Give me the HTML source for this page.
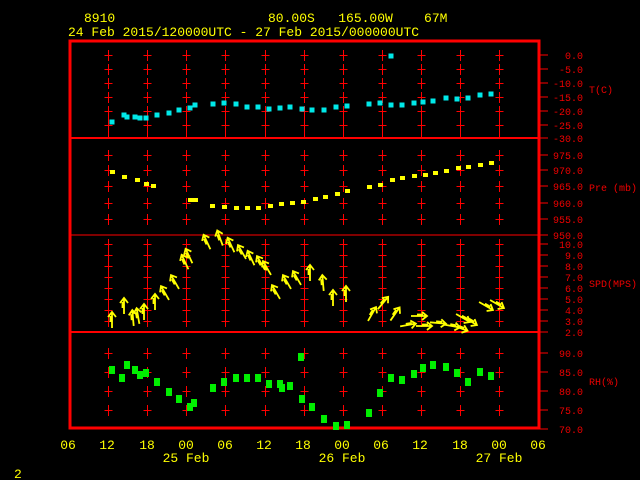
<!DOCTYPE html>
<html><head><meta charset="utf-8"><style>
html,body{margin:0;padding:0;background:#000;width:640px;height:480px;overflow:hidden}
svg{display:block}
text{font-family:"Liberation Mono",monospace}
</style></head><body>
<svg id="s" width="640" height="480" xmlns="http://www.w3.org/2000/svg">
<g fill="#ffff00" font-size="13">
<text x="84" y="22">8910</text>
<text x="268" y="22" xml:space="preserve">80.00S   165.00W    67M</text>
<text x="68" y="36">24 Feb 2015/120000UTC - 27 Feb 2015/000000UTC</text>
<g text-anchor="middle">
<text x="68" y="449">06</text><text x="107" y="449">12</text><text x="147" y="449">18</text><text x="186" y="449">00</text><text x="225" y="449">06</text><text x="264" y="449">12</text><text x="303" y="449">18</text><text x="342" y="449">00</text><text x="381" y="449">06</text><text x="420" y="449">12</text><text x="460" y="449">18</text><text x="499" y="449">00</text><text x="538" y="449">06</text>
<text x="186" y="462">25 Feb</text><text x="342" y="462">26 Feb</text><text x="499" y="462">27 Feb</text>
</g>
<text x="14" y="478">2</text>
</g>
<g id="grid" stroke="#ff0000" stroke-width="1" fill="none"></g>
<g id="lab" fill="#ee0000" font-size="10" text-anchor="end"></g>
<g fill="#ee0000" font-size="10">
<text x="589" y="93">T(C)</text><text x="589" y="191">Pre (mb)</text><text x="589" y="287">SPD(MPS)</text><text x="589" y="385">RH(%)</text>
</g>
<g stroke="#ff0000" fill="none">
<rect x="70" y="41" width="469" height="387" stroke-width="3"/>
<line x1="70" y1="138" x2="539" y2="138" stroke-width="2"/>
<line x1="70" y1="235" x2="539" y2="235" stroke-width="1"/>
<line x1="70" y1="332" x2="539" y2="332" stroke-width="2"/>
</g>
<g id="dat"></g>
</svg>
<script>
var NS="http://www.w3.org/2000/svg";
function el(p,t,a,txt){var e=document.createElementNS(NS,t);for(var k in a)e.setAttribute(k,a[k]);if(txt!=null)e.textContent=txt;p.appendChild(e);return e;}
var grid=document.getElementById('grid'),lab=document.getElementById('lab'),dat=document.getElementById('dat');
var cols=[];for(var k=1;k<=11;k++)cols.push(69+39.1*k);
function levels(list,cross){list.forEach(function(l){var y=l[1];
 el(grid,'line',{x1:539,y1:y,x2:548,y2:y});
 el(lab,'text',{x:583,y:y+4},l[0]);
 if(cross)cols.forEach(function(x){x=Math.round(x)+0.5;el(grid,'line',{x1:x-4,y1:y+.5,x2:x+4,y2:y+.5});el(grid,'line',{x1:x,y1:y-5,x2:x,y2:y+6});});});}
levels([["0.0",55],["-5.0",69],["-10.0",83],["-15.0",97],["-20.0",111],["-25.0",125]],true);
levels([["-30.0",138]],false);
levels([["975.0",155],["970.0",170],["965.0",186],["960.0",203],["955.0",219]],true);
levels([["950.0",235]],false);
var sp=[];for(var v=10;v>=2;v--)sp.push([v+".0",244+11*(10-v)]);
levels(sp.slice(0,8),true);levels(sp.slice(8),false);
levels([["90.0",353],["85.0",372],["80.0",391],["75.0",410]],true);
levels([["70.0",429]],false);
cols.forEach(function(x){x=Math.round(x)+0.5;el(grid,'line',{x1:x,y1:111,x2:x,y2:138});});
var T=[[112,122],[124,115],[127,117],[135,117],[140,118],[146,118],[157,115],[169,113],[179,110],[190,108],[195,105],[213,104],[224,103],[236,104],[247,107],[258,107],[269,109],[280,108],[290,107],[302,109],[312,110],[324,110],[336,107],[347,106],[369,104],[380,103],[391,105],[402,105],[414,103],[423,102],[433,101],[446,98],[457,99],[468,98],[480,95],[491,94],[391,56]];
T.forEach(function(p){el(dat,'rect',{x:p[0]-2.5,y:p[1]-2.5,width:5,height:5,fill:'#00e8e8'});});
var P=[[112,172],[124,177],[137,180],[146,184],[153,186],[190,200],[195,200],[212,206],[224,207],[236,208],[247,208],[258,208],[270,206],[281,204],[292,203],[303,202],[315,199],[325,197],[337,194],[347,191],[369,187],[380,185],[392,180],[402,178],[414,176],[425,175],[435,173],[446,171],[458,168],[468,167],[480,165],[491,163]];
P.forEach(function(p){el(dat,'rect',{x:p[0]-2,y:p[1]-2,width:5,height:4,fill:'#ffff00'});});
var R=[[112,370],[122,378],[127,365],[135,370],[140,375],[146,373],[157,382],[169,392],[179,399],[190,407],[194,403],[213,388],[224,382],[236,378],[247,378],[258,378],[269,384],[280,384],[282,388],[290,386],[301,357],[302,399],[312,407],[324,419],[336,426],[347,425],[369,413],[380,393],[391,378],[402,380],[414,374],[423,368],[433,365],[446,367],[457,373],[468,382],[480,372],[491,376]];
R.forEach(function(p){el(dat,'rect',{x:p[0]-3,y:p[1]-4,width:6,height:8,fill:'#00ee00'});});
var W=[[112,320,0],[124,306,0],[133,318,-5],[138,316,-10],[144,312,0],[155,302,0],[165,293,-30],[175,282,-30],[185,262,-25],[189,256,-25],[207,242,-25],[220,238,-20],[231,245,-25],[242,252,-30],[251,258,-25],[261,263,-30],[267,268,-30],[276,292,-30],[287,282,-30],[297,278,-30],[310,273,0],[323,283,-5],[333,298,0],[346,294,0],[372,314,30],[383,303,40],[395,314,35],[408,325,80],[419,316,90],[424,326,90],[438,323,95],[452,326,100],[463,318,120],[470,321,120],[486,306,120],[497,304,120],[460,328,110]];
W.forEach(function(w){var g=el(dat,'g',{transform:'translate('+w[0]+','+w[1]+') rotate('+w[2]+')',stroke:'#ffff00','stroke-width':1.8,fill:'none'});
 el(g,'path',{d:'M0,8 L0,-7 M-4,-3 L0,-8 L4,-3 M-1.5,-4 L-1.5,2'});});
</script>
</body></html>
